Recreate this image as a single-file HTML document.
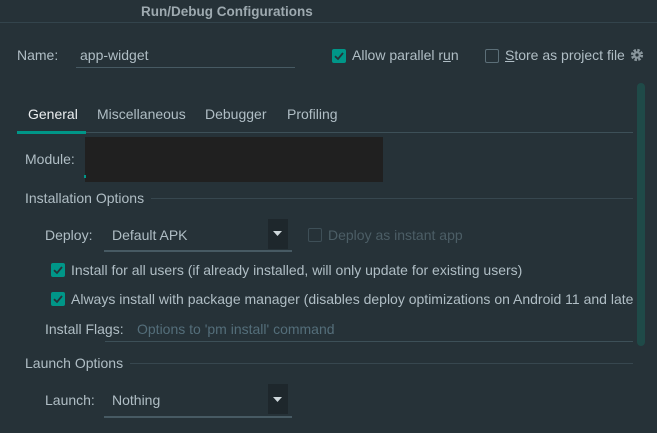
<!DOCTYPE html>
<html><head><style>
*{margin:0;padding:0;box-sizing:border-box}
body{width:657px;height:433px;background:#263238;font-family:"Liberation Sans",sans-serif;font-size:14px;color:#b0bec5;position:relative;overflow:hidden}
.a{position:absolute;white-space:nowrap;line-height:16px}
.ln{position:absolute;height:1px;background:#3b4d56}
.cb{position:absolute;width:14px;height:14px;background:#009688;border-radius:2px}
.cb svg{position:absolute;left:0;top:0}
.ub{position:absolute;width:14px;height:14px;border:1.5px solid #5c6f78;border-radius:2px}
</style></head><body>
<div class="a" style="left:141px;top:4px;font-weight:bold;color:#9eaab0;font-size:13.5px">Run/Debug Configurations</div>
<div class="ln" style="left:0;top:22px;width:657px;background:#33444c"></div>

<div class="a" style="left:17px;top:47px">Name:</div>
<div class="a" style="left:80px;top:47px">app-widget</div>
<div class="ln" style="left:76px;top:67px;width:219px;background:#475a63"></div>

<div class="cb" style="left:332px;top:49px"><svg width="14" height="14"><path d="M3 7.2 L6 10 L11 4" stroke="#263238" stroke-width="1.8" fill="none"/></svg></div>
<div class="a" style="left:352px;top:47px">Allow parallel r<u>u</u>n</div>
<div class="ub" style="left:485px;top:49px"></div>
<div class="a" style="left:505px;top:47px"><u>S</u>tore as project file</div>
<svg class="a" style="left:630px;top:48px" width="14" height="14" viewBox="0 0 14 14"><circle cx="7" cy="7" r="4.8" fill="none" stroke="#8a979d" stroke-width="2.6" stroke-dasharray="2.4 1.4"/><circle cx="7" cy="7" r="3.8" fill="#8a979d"/><circle cx="7" cy="7" r="1.6" fill="#263238"/></svg>

<div class="a" style="left:28px;top:106px;color:#eceff1">General</div>
<div class="a" style="left:97px;top:106px">Miscellaneous</div>
<div class="a" style="left:205px;top:106px">Debugger</div>
<div class="a" style="left:287px;top:106px">Profiling</div>
<div class="ln" style="left:17px;top:132px;width:616px;background:#3d5058"></div>
<div class="ln" style="left:17px;top:131px;width:69px;height:3px;background:#009688"></div>

<div style="position:absolute;left:637px;top:83px;width:8px;height:263px;background:#1f4a48;border-radius:4px"></div>

<div class="a" style="left:25px;top:151px">Module:</div>
<div style="position:absolute;left:85px;top:137px;width:298px;height:45px;background:#202020"></div>
<div style="position:absolute;left:84px;top:175px;width:2px;height:3px;background:#009688"></div>

<div class="a" style="left:25px;top:190px">Installation Options</div>
<div class="ln" style="left:151px;top:198px;width:482px;background:#37474f"></div>

<div class="a" style="left:45px;top:227px">Deploy:</div>
<div class="a" style="left:112px;top:227px">Default APK</div>
<div style="position:absolute;left:268px;top:219px;width:20px;height:30px;background:#1e272c"></div>
<svg class="a" style="left:273px;top:231px" width="10" height="6"><path d="M0 0H9L4.5 5Z" fill="#cfd8dc"/></svg>
<div class="ln" style="left:104px;top:250px;width:188px;height:2px;background:#475a63"></div>
<div class="ub" style="left:308px;top:228px;border-color:#3e4f57"></div>
<div class="a" style="left:328px;top:227px;color:#4c5e66">Deploy as instant app</div>

<div class="cb" style="left:51px;top:263px"><svg width="14" height="14"><path d="M3 7.2 L6 10 L11 4" stroke="#263238" stroke-width="1.8" fill="none"/></svg></div>
<div class="a" style="left:71px;top:262px">Install for all users (if already installed, will only update for existing users)</div>
<div class="cb" style="left:51px;top:292px"><svg width="14" height="14"><path d="M3 7.2 L6 10 L11 4" stroke="#263238" stroke-width="1.8" fill="none"/></svg></div>
<div class="a" style="left:71px;top:291px;width:562px;overflow:hidden">Always install with package manager (disables deploy optimizations on Android 11 and later)</div>

<div class="a" style="left:45px;top:321px">Install Flags:</div>
<div class="a" style="left:137px;top:321px;color:#546e7a">Options to 'pm install' command</div>
<div class="ln" style="left:105px;top:341px;width:528px;background:#3d5058"></div>

<div class="a" style="left:25px;top:355px">Launch Options</div>
<div class="ln" style="left:130px;top:363px;width:503px;background:#37474f"></div>

<div class="a" style="left:45px;top:392px">Launch:</div>
<div class="a" style="left:112px;top:392px">Nothing</div>
<div style="position:absolute;left:268px;top:384px;width:20px;height:30px;background:#1e272c"></div>
<svg class="a" style="left:273px;top:397px" width="10" height="6"><path d="M0 0H9L4.5 5Z" fill="#cfd8dc"/></svg>
<div class="ln" style="left:104px;top:416px;width:188px;height:2px;background:#475a63"></div>
</body></html>
